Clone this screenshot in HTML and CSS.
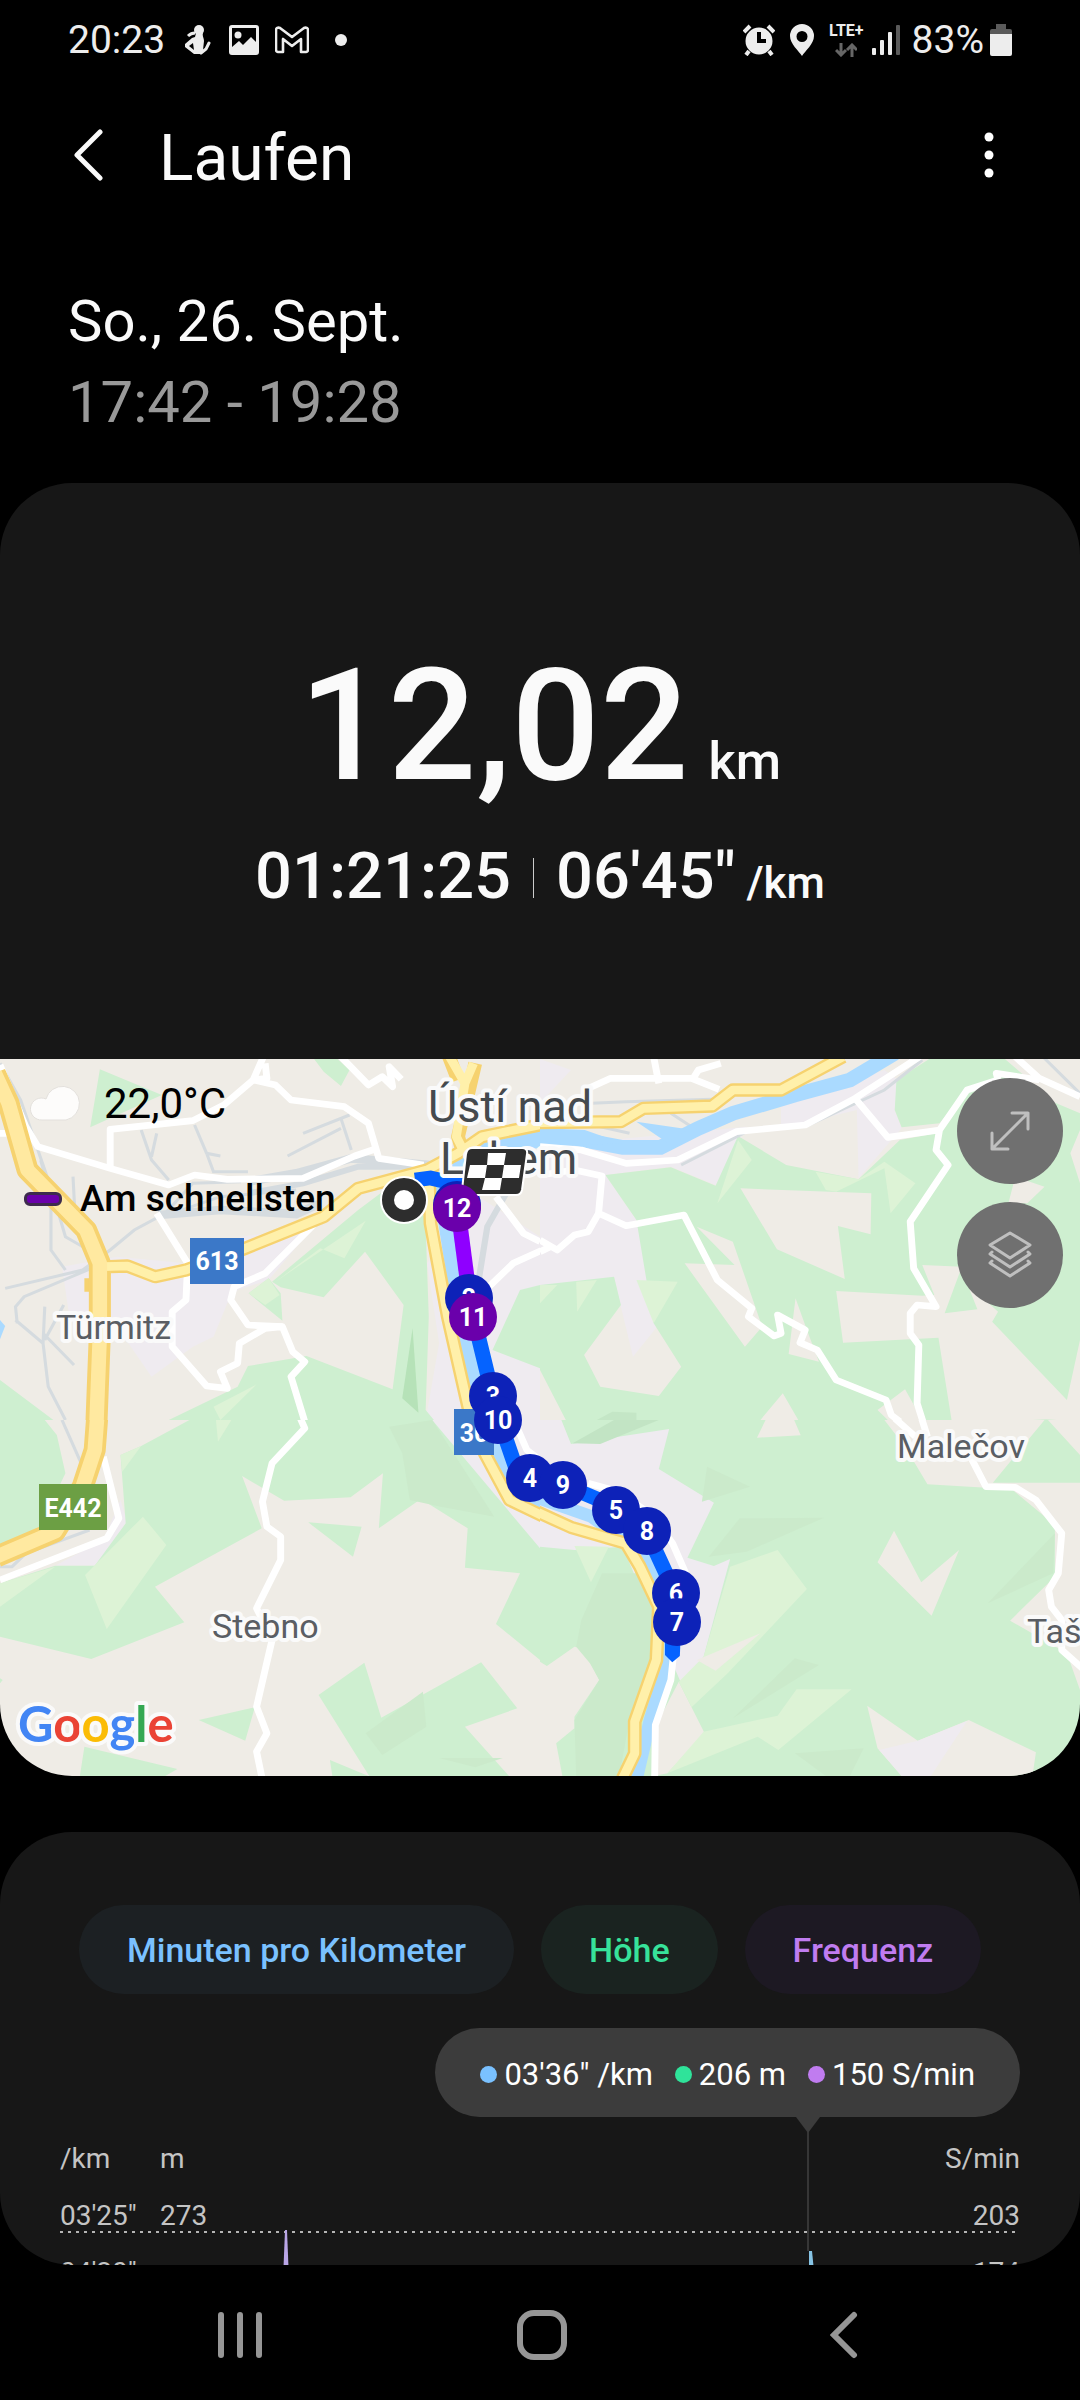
FILE: index.html
```html
<!DOCTYPE html>
<html lang="de">
<head>
    <meta charset="UTF-8">
    <meta name="viewport" content="width=device-width, initial-scale=1.0">
    <title>Laufen</title>
    <link rel="stylesheet" href="styles.css">
</head>
<body>
    <div class="status-bar">
        <span class="clock">20:23</span>
        <svg class="status-icon runner" width="26" height="30" viewBox="0 0 26 30">
            <circle cx="14" cy="5" r="5"/>
            <path d="M11 8h7c-1 3 1 5 1 8l-1 9-2 4H9l-9-7c-1-1-1-2 0-3l7-6 3-1z"/>
            <path d="M3 11c2-2 4-3 7-3" fill="none" stroke="#ededed" stroke-width="3"/>
            <path d="M4 21l4-3 1 7z" fill="#000"/>
            <path d="M16 28l5-4 3-6" fill="none" stroke="#ededed" stroke-width="3" stroke-linecap="round"/>
        </svg>
        <svg class="status-icon" width="30" height="30" viewBox="0 0 30 30">
            <path fill-rule="evenodd" d="M3 0h24a3 3 0 0 1 3 3v24a3 3 0 0 1-3 3H3a3 3 0 0 1-3-3V3a3 3 0 0 1 3-3zM3 3v19l7-6 4 4 8-8 5 5V3z"/>
            <circle cx="9" cy="10" r="3.5"/>
        </svg>
        <svg class="status-icon" width="34" height="28" viewBox="0 0 34 28">
            <path d="M8 26H3c-1 0-2-1-2-2V4c0-2 2-3 4-2l12 9 12-9c2-1 4 0 4 2v20c0 1-1 2-2 2h-5V13l-9 7-9-7z" fill="none" stroke="#ededed" stroke-width="2.6" stroke-linejoin="round"/>
        </svg>
        <span class="more-dot"></span>
        <div class="status-right">
            <svg class="status-icon" width="32" height="32" viewBox="0 0 32 32">
                <path fill-rule="evenodd" d="M16 3.500a13.500 13.500 0 1 1 0 27a13.500 13.500 0 0 1 0-27zM14 8v11h9v-4h-5V8z"/>
                <path d="M1 8l6-6M31 8l-6-6M6 27l-3 4M26 27l3 4" stroke="#ededed" stroke-width="4"/>
            </svg>
            <svg class="status-icon" width="24" height="32" viewBox="0 0 24 32">
                <path fill-rule="evenodd" d="M12 0a12 12 0 0 1 12 12c0 8-9 15-12 20C9 27 0 20 0 12A12 12 0 0 1 12 0zM12 7a5.500 5.500 0 1 0 0 11a5.500 5.500 0 0 0 0-11z"/>
            </svg>
            <div class="network">
                <span>LTE+</span>
                <svg width="22" height="14" viewBox="0 0 22 14" fill="none" stroke="#666" stroke-width="3">
                    <path d="M6 0v12M1 7l5 5 5-5M17 14V2M12 7l5-5 5 5"/>
                </svg>
            </div>
            <svg class="status-icon signal" width="28" height="30" viewBox="0 0 28 30">
                <rect x="0" y="23" width="4" height="7" rx="1"/>
                <rect x="8" y="15" width="4" height="15" rx="1"/>
                <rect x="16" y="7" width="4" height="23" rx="1"/>
                <rect x="24" y="0" width="4" height="30" rx="1" fill="#5a5a5a"/>
            </svg>
            <span class="clock">83%</span>
            <svg class="status-icon battery" width="22" height="32" viewBox="0 0 22 32">
                <path fill="#5a5a5a" d="M6 0h10v5h4a2 2 0 0 1 2 2v4H0V7a2 2 0 0 1 2-2h4z"/>
                <path d="M0 10h22v20a2 2 0 0 1-2 2H2a2 2 0 0 1-2-2z"/>
            </svg>
        </div>
    </div>

    <header class="app-bar">
        <button class="icon-btn" aria-label="Zurück">
            <svg width="30" height="52" viewBox="0 0 30 52" fill="none" stroke="#fafafa" stroke-width="5" stroke-linecap="round" stroke-linejoin="round"><path d="M27 3L4 26l23 23"/></svg>
        </button>
        <h1>Laufen</h1>
        <button class="icon-btn menu" aria-label="Mehr">
            <svg width="10" height="46" viewBox="0 0 10 46" fill="#fff"><circle cx="5" cy="5" r="4.500"/><circle cx="5" cy="23" r="4.500"/><circle cx="5" cy="41" r="4.500"/></svg>
        </button>
    </header>

    <main>
        <div class="date">
            <p>So., 26. Sept.</p>
            <p class="time">17:42 - 19:28</p>
        </div>

        <section class="summary">
            <div class="distance"><span class="distance-value">12,02</span><span class="distance-unit">km</span></div>
            <div class="details">
                <span>01:21:25</span>
                <span class="divider"></span>
                <span>06'45"</span><small>/km</small>
            </div>
        </section>

        <section class="map">
            <svg class="map-canvas" viewBox="0 0 1080 717">
                <!-- north west -->
                <svg x="0" y="-9" width="540" height="370" viewBox="0 0 1568 1110" preserveAspectRatio="none">
                    <rect class="land" width="1568" height="1110"/>
                    <g class="urban">
                        <path d="M180 650L340 620 540 640 700 560 910 530 780 690 690 720 660 760 620 860 560 890 440 980 360 860 200 790z"/>
                        <path d="M1390 440L1568 560V1110H1236L1275 880 1240 640z"/>
                    </g>
                    <g class="wood">
                        <path d="M290 58L470 135 262 232zM912 27H980L1015 60 990 108 940 65z"/>
                        <path d="M790 695L1040 480 1105 430 1235 500 1245 800 1236 1080 1260 1110H490L690 1010 720 948 890 918 1140 1018 1172 765 1060 605 940 742 815 712z"/>
                        <path d="M722 730L780 685 815 730 820 812zM1430 900L1510 720 1568 705V955zM0 990L155 1110H0z"/>
                    </g>
                    <path class="meadow" d="M800 695L1062 512 1000 625 930 595zM620 1070L745 1003 640 1110zM722 730L780 685 812 735 770 765z"/>
                    <path fill="#b6e2b8" d="M1198 835L1215 1088 1168 1045z"/>
                    <g class="rail">
                        <path d="M0 40L60 150 110 300 150 420 190 560 240 590 310 610M212 380L218 500 260 590M118 330L148 440V600L190 660M15 715L240 660 320 600 390 540 480 490 560 400 700 395M50 820L45 770 70 740 300 640M45 810L125 880 140 1010 190 1110M130 770L125 880M185 765L130 870M125 850L215 945M410 240L440 330 490 390M455 250L440 320M565 225L600 310 640 318M600 310L620 365H720M880 250L1015 195M990 205L1020 300M835 318L990 235M500 490L640 440 860 420"/>
                        <path stroke-width="26" d="M720 395L860 370 1020 325 1250 345M460 495L640 480 860 492 930 460"/>
                        <path stroke-width="18" d="M720 430L880 400 1040 350 1200 350M1470 430L1415 530 1390 690"/>
                    </g>
                    <path class="water" stroke-width="50" d="M1600 262L1450 290 1340 330 1290 400 1295 500 1325 700 1365 950 1405 1120"/>
                    <path fill="#aadaff" d="M0 810L15 828 0 868z"/>
                    <g class="road">
                        <path d="M0 45L75 230 110 290 320 355 490 405 565 375 660 388 880 385 1030 318 1090 297"/>
                        <path d="M320 355V238L560 212 650 165 735 90 765 20M735 90L775 85 770 40M735 90L800 105 845 150 1000 170 1070 220 1100 325 1230 345"/>
                        <path d="M990 20L1070 105 1110 80 1140 110 1130 50 1165 88M0 250H20"/>
                        <path d="M455 490L545 640 540 750 500 785V890L600 1008 660 1015 640 965 690 940 695 880 770 835 820 830 850 905 885 935 845 980 885 1115"/>
                        <path d="M910 525L770 670 680 710 670 750 720 825 820 830M1440 440L1520 550 1568 575M1575 600L1490 640 1420 710 1400 800"/>
                    </g>
                    <path class="main-edge" d="M1300 10L1330 90M1380 40L1330 260 1345 310M320 650L370 648 450 680 540 660 700 600 940 500 1040 415 1240 360 1330 310 1400 260 1580 222M1245 360L1250 520 1300 800 1370 1120M262 705H245"/>
                    <path class="motorway-edge" d="M-15 70L25 160 80 360 250 540 290 640V850L280 1120"/>
                    <path class="main" d="M1300 10L1350 100 1375 40M1350 100L1325 260 1345 300M300 650L370 648 450 680 540 660 700 600 940 500 1040 415 1240 360 1330 310 1400 260 1580 222M1245 360L1250 520 1300 800 1370 1120"/>
                    <path class="motorway" d="M-15 70L25 160 80 360 250 540 290 640V850L280 1120"/>
                    <path class="route" d="M1205 390L1250 384 1340 405"/>
                    <path class="route fast" d="M1330 480L1358 700"/>
                    <path class="route" d="M1375 800L1415 970 1450 1120"/>
                </svg>
                <!-- north east -->
                <svg x="540" y="-9" width="540" height="370" viewBox="0 0 1568 1110" preserveAspectRatio="none">
                    <rect class="land" width="1568" height="1110"/>
                    <path class="urban" d="M0 27L90 60 0 160zM0 290L600 230 510 405 380 350 190 375 280 510 340 830 270 920 235 770 215 680 0 740zM700 170L1000 60 1040 90 1030 180 1050 235 925 385 920 180 700 235z"/>
                    <g class="wood">
                        <path d="M190 375L380 352 510 407 575 258 715 345 925 388 1045 270 1150 250 1240 120 1340 90 1568 190V1110H75L0 960V705L215 680 235 765 128 915 175 1010 345 1038 410 950 330 820 280 510z"/>
                        <path d="M1035 90L1130 27H1350L1410 80 1240 120 1160 220 1050 232 1030 180z"/>
                    </g>
                    <g class="land">
                        <path d="M582 415L962 430 960 553 865 528 885 687 688 598zM455 530L560 575 645 830 595 890 420 640 565 645zM742 745L775 840 810 935 722 912zM640 1110L705 1030 750 1110zM1380 380L1465 410 1415 460 1360 460zM980 1080L1060 1018 1110 1110H1010zM1568 240L1540 310 1568 400z"/>
                        <path d="M1110 645L1225 650 1175 790 1270 778 1240 700 1330 785 1313 815 1530 1050 1568 870V1110H1500L1470 1108 1430 1110H1195L1157 863 880 878 860 723 1110 737 1145 735z"/>
                    </g>
                    <path class="meadow" d="M575 270L615 330 515 460zM800 365L925 388 1000 335 1090 400 1018 490 1000 355 860 425 830 420zM280 690L400 695 330 820zM0 705H50L0 760zM105 695L165 690 108 785z"/>
                    <path fill="#c4e6c6" d="M165 1110L210 1085 280 1088V1110z"/>
                    <path class="rail" d="M1110 30L1000 120 780 225 600 245 410 345M1460 20L1568 130M0 250L130 220 260 250M380 190L440 230"/>
                    <path class="rail" stroke-width="26" d="M150 160L250 155 500 148"/>
                    <path class="water" stroke-width="44" d="M-10 262L100 265 240 292 350 292 460 235 560 190 740 135 900 90 1030 10"/>
                    <path fill="#aadaff" d="M280 215L430 238 370 278zM0 235L130 240 240 280 0 290z"/>
                    <g class="road">
                        <path d="M0 290L120 300 250 340 400 330 570 245 770 225 915 145 1110 15M130 120L205 85H440L520 118M330 20L345 100M445 85L460 60 525 40"/>
                        <path d="M0 375L100 360 180 378 170 490 250 527 418 495 515 690 615 775 605 800 680 858 700 850 690 795 770 840 755 878 805 900 860 990 1005 1050 1020 1095 1045 1115M170 490L140 545 100 555 50 600 0 570M0 605L30 590"/>
                        <path d="M915 145L1010 262 1160 240 1240 120 1330 90 1325 70 1450 90M1160 240L1150 300 1185 345 1075 515 1085 655 1150 770 1095 765 1075 790V850L1100 885 1095 1060 1112 1115M1380 20L1450 85 1568 140"/>
                    </g>
                    <path class="main-edge" d="M-10 218L235 215 300 175 500 168 560 120 700 120 880 20"/>
                    <path class="main" d="M-10 218L235 215 300 175 500 168 560 120 700 120 880 20"/>
                </svg>
                <!-- south west -->
                <svg x="0" y="361" width="540" height="356" viewBox="0 0 1568 1068" preserveAspectRatio="none">
                    <rect class="land" width="1568" height="1068"/>
                    <path class="urban" d="M160 437H275L370 310 350 240 300 360zM1250 0H1568V390z"/>
                    <path class="wood" d="M0 0H130L165 45 190 160 110 330 0 390zM410 78L550 0H1255L1568 385V720L1440 612 1510 460 1350 443 1358 325 1222 237 1100 325 1112 160 1018 232 825 242 703 168 760 325 450 500 535 607 265 717 0 650V490L160 437H275L365 310 350 105z"/>
                    <path class="wood" d="M895 307L1050 320 1025 410zM925 825L1058 728 1107 893 1397 727 1502 865 1350 920 1478 1068H1072zM577 900L740 862 712 962zM245 980L515 1047 480 1068H232zM958 1020L1070 1068H965zM0 775L8 780 0 790z"/>
                    <path class="meadow" d="M0 490L160 440 0 560zM247 465L415 290 483 375 310 627zM350 105L410 78 355 155zM627 0H672L633 65z"/>
                    <path class="grove" d="M1062 940L1228 815 1238 920 1110 1005zM1130 20L1255 0 1435 290 1280 260 1190 240 1168 100zM1275 1014L1460 1014 1380 1042z"/>
                    <path class="rail" d="M180 0L240 140M0 440H35L75 400 260 330"/>
                    <path class="water" stroke-width="40" d="M1405 -10L1450 120 1500 210 1580 255"/>
                    <path class="road" d="M300 110L345 295 310 355 0 480M870 -10L885 25 790 130 762 245 775 320 815 350V420L745 565 790 660 745 860 775 940 745 995 760 1070M1500 20L1530 90 1580 130"/>
                    <path class="main-edge" d="M1355 -10L1410 105 1480 240 1580 290"/>
                    <path class="motorway-edge" d="M282 -5L275 90 240 200 160 335 -10 410"/>
                    <path class="main" d="M1355 -10L1410 105 1480 240 1580 290"/>
                    <path class="motorway" d="M282 -5L275 90 240 200 160 335 -10 410"/>
                    <path class="route" d="M1445 -10L1470 60 1500 150 1580 190"/>
                </svg>
                <!-- south east -->
                <svg x="540" y="361" width="540" height="356" viewBox="0 0 1568 1068" preserveAspectRatio="none">
                    <rect class="wood" width="1568" height="1068"/>
                    <path class="urban" d="M0 0H62L90 72 375 27 345 147 505 248 428 413 505 438 552 417 475 710 410 790 330 600 240 380 100 390 0 380z"/>
                    <g class="land">
                        <path d="M403 785L478 940 370 1060 330 1068 345 900zM0 725L20 738 100 680 125 685 172 780 100 890V925L47 970 65 1068H0z"/>
                        <path d="M655 0H738L757 46 630 53zM1028 332L1107 487 1217 390 1137 587 980 427z"/>
                        <path d="M1000 0H1465L1315 188H1568V810L1530 700 1365 602 1495 470V315L1370 208 1125 193 1060 80zM1475 0H1568V105zM950 857L1097 962 1245 900 1440 997 1430 1068H1050L980 985z"/>
                    </g>
                    <path class="urban" d="M985 990L1097 962 1240 903 1135 1068H1050z"/>
                    <path class="meadow" d="M552 440L690 390 775 507 545 760 440 862 403 785 475 710zM370 1060L475 935 690 887 745 808H905L692 990 632 950zM100 378L200 380 148 487z"/>
                    <path class="land" d="M455 720L640 640 510 752z"/>
                    <path class="grove" d="M180 460H300L340 580 330 720 260 900 230 1068H105L100 900 172 780 145 730 105 680 120 600zM580 295L825 293 600 395 490 410zM740 715L810 735 560 895zM485 140L610 200 470 245zM1495 340L1490 460 1300 550zM740 1000L940 985 900 1068H830z"/>
                    <path fill="#c2e4c4" d="M215 0H345L175 72 95 70z"/>
                    <path class="water" stroke-width="38" d="M-10 232L150 290 300 400 370 560 372 720 320 900 280 1075"/>
                    <path class="road" d="M140 190L230 215 330 290 385 370 440 500M388 700L380 780 335 915 333 1070M1030 -5L1090 50M1108 -5L1125 50M1250 110L1295 200 1380 202 1440 240 1515 340 1505 460 1477 510 1485 560 1515 600V690L1575 745"/>
                    <path class="main-edge" d="M-10 275L90 322 250 370 290 440 345 560 338 720 275 905V1000L240 1075"/>
                    <path class="main" d="M-10 275L90 322 250 370 290 440 345 560 338 720 275 905V1000L240 1075"/>
                    <path class="route" d="M-40 175L70 195 230 265 310 335 395 525 385 670"/>
                    <path fill="#0563ff" d="M363 660H408L406 708 384 727 363 705z"/>
                </svg>

                <g class="city">
                    <text x="428" y="63">Ústí nad</text>
                    <text x="440" y="115">Labem</text>
                </g>
                <g class="village">
                    <text x="56" y="280">Türmitz</text>
                    <text x="212" y="579">Stebno</text>
                    <text x="897" y="399">Malečov</text>
                    <text x="1027" y="584">Taš</text>
                </g>
                <g class="shield">
                    <rect x="190" y="179" width="54" height="46" fill="#3b78c8"/>
                    <text x="217" y="211">613</text>
                    <rect x="454" y="350" width="40" height="46" fill="#3b78c8"/>
                    <text x="474" y="383">30</text>
                    <rect x="39" y="425" width="68" height="46" fill="#6c9f44"/>
                    <text x="73" y="458">E442</text>
                </g>

                <!-- start and finish -->
                <circle cx="404" cy="141" r="23" fill="#2d2d2d" stroke="#fff" stroke-width="2"/>
                <circle cx="404" cy="141" r="10" fill="#fff"/>
                <circle cx="457" cy="146" r="24" fill="#0d22b8"/>
                <path d="M472 89H522Q528 89 527 95L522 131Q521 136 516 136H466Q461 136 462 131L466 95Q467 89 472 89z" fill="#2d2d2d" stroke="#fff" stroke-width="2"/>
                <path fill="#fff" d="M488 94h18l-2 12h-17zM470 106h17l-2 13h-18zM504 106h17l-2 13h-17zM485 119h17l-2 12h-18z"/>

                <g class="pins">
                    <g class="pin-fast"><circle cx="457" cy="149" r="24"/><text x="457" y="158">12</text></g>
                    <g><circle cx="469" cy="239" r="24"/><text x="469" y="248">2</text></g>
                    <g class="pin-fast"><circle cx="473" cy="258" r="24"/><text x="473" y="267">11</text></g>
                    <g><circle cx="493" cy="337" r="24"/><text x="493" y="346">3</text></g>
                    <g><circle cx="498" cy="361" r="24"/><text x="498" y="370">10</text></g>
                    <g><circle cx="530" cy="419" r="24"/><text x="530" y="428">4</text></g>
                    <g><circle cx="563" cy="426" r="24"/><text x="563" y="435">9</text></g>
                    <g><circle cx="616" cy="451" r="24"/><text x="616" y="460">5</text></g>
                    <g><circle cx="647" cy="472" r="24"/><text x="647" y="481">8</text></g>
                    <g><circle cx="676" cy="534" r="24"/><text x="676" y="543">6</text></g>
                    <g><circle cx="677" cy="563" r="24"/><text x="677" y="572">7</text></g>
                </g>

                <text class="google" x="18" y="683"><tspan fill="#4285f4">G</tspan><tspan fill="#ea4335">o</tspan><tspan fill="#fbbc05">o</tspan><tspan fill="#4285f4">g</tspan><tspan fill="#34a853">l</tspan><tspan fill="#ea4335">e</tspan></text>
            </svg>

            <div class="map-info">
                <div class="weather">
                    <svg width="50" height="36" viewBox="0 0 50 36"><path d="M12 34a11 11 0 1 1 4-21 17 17 0 1 1 20 21z" fill="#fdfcfb" stroke="#e3e0dc"/></svg>
                    <span>22,0°C</span>
                </div>
                <div class="legend"><span class="swatch"></span>Am schnellsten</div>
            </div>
            <div class="map-controls">
                <button aria-label="Vergrößern">
                    <svg width="44" height="44" viewBox="0 0 44 44"><path d="M4 40L40 4M24 4h16v16M4 24v16h16"/></svg>
                </button>
                <button aria-label="Ebenen">
                    <svg width="46" height="50" viewBox="0 0 46 50"><path d="M23 3L43 15 23 28 3 15zM5 22l-2 2 20 13 20-13-2-2M5 31l-2 2 20 13 20-13-2-2"/></svg>
                </button>
            </div>
        </section>

        <section class="chart-card">
            <div class="filters">
                <button class="pace">Minuten pro Kilometer</button>
                <button class="height">Höhe</button>
                <button class="cadence">Frequenz</button>
            </div>
            <div class="tooltip">
                <span class="value pace-dot">03'36" /km</span>
                <span class="value height-dot">206 m</span>
                <span class="value cadence-dot">150 S/min</span>
            </div>
            <div class="chart">
                <div class="axis-row"><span>/km</span><span>m</span><span>S/min</span></div>
                <div class="axis-row line"><span>03'25"</span><span>273</span><span>203</span></div>
                <div class="axis-row"><span>04'20"</span><span></span><span>174</span></div>
                <svg class="peak peak-cadence" width="6" height="60" viewBox="0 0 6 60"><path d="M2 0h2l2 50v10H0V50z" fill="#b9a5e6"/></svg>
                <svg class="peak peak-pace" width="6" height="40" viewBox="0 0 6 40"><path d="M1 0h3l2 20v20H1z" fill="#86c3e4"/></svg>
            </div>
        </section>
    </main>

    <nav class="nav-bar">
        <button aria-label="Letzte Apps"><svg width="44" height="48" viewBox="0 0 44 48"><path d="M3 4v40M22 4v40M41 4v40"/></svg></button>
        <button aria-label="Startseite"><svg width="50" height="50" viewBox="0 0 50 50"><rect x="3" y="3" width="44" height="44" rx="14"/></svg></button>
        <button aria-label="Zurück"><svg width="28" height="48" viewBox="0 0 28 48"><path d="M24 4L4 24l20 20"/></svg></button>
    </nav>
</body>
</html>
```

FILE: styles.css
```css
* {
    box-sizing: border-box;
}

body {
    margin: 0;
    height: 100vh;
    display: flex;
    flex-direction: column;
    background: #000;
    color: #fafafa;
    font-family: Roboto, "Liberation Sans", sans-serif;
    overflow: hidden;
}

button {
    border: none;
    padding: 0;
    background: none;
    color: inherit;
    font-family: inherit;
    cursor: pointer;
}

svg {
    display: block;
}

h1, p {
    margin: 0;
    font-weight: 400;
}

/* status bar */
.status-bar {
    display: flex;
    align-items: center;
    height: 80px;
    padding: 0 68px;
    flex: none;
    color: #ededed;
}

.clock {
    font-size: 39px;
    line-height: 80px;
}

.status-icon {
    fill: #ededed;
    margin-right: 16px;
}

.runner {
    margin: 0 18px 0 20px;
}

.more-dot {
    width: 12px;
    height: 12px;
    margin-left: 10px;
    border-radius: 50%;
    background: #ededed;
}

.status-right {
    display: flex;
    align-items: center;
    margin-left: auto;
}

.status-right .status-icon {
    margin-right: 15px;
}

.network {
    display: flex;
    flex-direction: column;
    align-items: center;
    gap: 4px;
    margin-right: 8px;
    font-size: 16px;
    font-weight: 700;
    line-height: 16px;
}

.status-right .signal {
    margin-right: 12px;
}

.status-right .battery {
    margin: 0 0 0 6px;
}

/* title */
.app-bar {
    display: flex;
    align-items: center;
    flex: none;
    height: 150px;
    padding: 0 86px 0 73px;
}

.app-bar h1 {
    margin-left: 56px;
    padding-top: 8px;
    font-size: 64px;
    line-height: 76px;
}

.menu {
    margin-left: auto;
}

main {
    flex: 1;
    min-height: 0;
    display: flex;
    flex-direction: column;
}

.date {
    padding: 51px 68px 40px;
    font-size: 58px;
    line-height: 81px;
}

.time {
    color: #999;
}

/* summary */
.summary {
    padding: 161px 20px 145px;
    border-radius: 72px 72px 0 0;
    background: #171717;
    font-weight: 500;
}

.distance {
    display: flex;
    justify-content: center;
    align-items: baseline;
    gap: 20px;
    line-height: 164px;
}

.distance-value {
    font-size: 156px;
}

.distance-unit {
    font-size: 52px;
    line-height: 60px;
}

.details {
    display: flex;
    justify-content: center;
    align-items: baseline;
    margin-top: 30px;
    font-size: 65px;
    line-height: 76px;
}

.details small {
    margin-left: 11px;
    font-size: 44px;
    line-height: 50px;
}

.divider {
    width: 1px;
    height: 40px;
    margin: 0 22px;
    background: #ccc;
}

/* map */
.map {
    position: relative;
    flex: none;
    border-radius: 0 0 72px 72px;
    overflow: hidden;
}

.map-canvas {
    width: 100%;
    height: auto;
}

.land {
    fill: #efece6;
}

.urban {
    fill: #efebf0;
}

.wood {
    fill: #ceefd0;
}

.grove {
    fill: #cbeacb;
}

.meadow {
    fill: #ddf3d6;
}

.water {
    fill: none;
    stroke: #aadaff;
}

.rail {
    fill: none;
    stroke: #d5dbdf;
    stroke-width: 9;
}

.road {
    fill: none;
    stroke: #fff;
    stroke-width: 20;
    stroke-linejoin: round;
}

.main, .main-edge, .motorway, .motorway-edge {
    fill: none;
    stroke: #fff0aa;
    stroke-width: 26;
    stroke-linejoin: round;
}

.main-edge {
    stroke: #f6d26f;
    stroke-width: 40;
}

.motorway {
    stroke: #ffe9a0;
    stroke-width: 42;
}

.motorway-edge {
    stroke: #f6d26f;
    stroke-width: 64;
}

.route {
    fill: none;
    stroke: #0563ff;
    stroke-width: 44;
}

.fast {
    stroke: #8f00ff;
}

.city, .village, .google {
    paint-order: stroke;
    stroke: #fafafa;
    stroke-width: 8px;
    stroke-linejoin: round;
}

.city {
    fill: #454a4e;
    font-size: 45px;
}

.village {
    fill: #5a5e64;
    font-size: 34px;
}

.shield, .pins {
    font-size: 25px;
    font-weight: 700;
    text-anchor: middle;
}

.shield text, .pins text {
    fill: #fff;
}

.pins circle {
    fill: #0d22b8;
}

.pins .pin-fast circle {
    fill: #6a00ab;
}

.google {
    font-family: Lato, sans-serif;
    font-size: 49px;
    font-weight: 700;
}

.map-info {
    position: absolute;
    top: 20px;
    left: 24px;
    color: #000;
}

.weather {
    display: flex;
    align-items: center;
    gap: 24px;
    padding-left: 6px;
    font-size: 42px;
    line-height: 50px;
}

.legend {
    display: flex;
    align-items: center;
    gap: 18px;
    margin-top: 50px;
    font-size: 37px;
    font-weight: 500;
    line-height: 40px;
}

.swatch {
    width: 38px;
    height: 14px;
    border: 3px solid #3d2b4d;
    border-radius: 6px;
    background: #6a00ab;
}

.map-controls {
    position: absolute;
    top: 19px;
    right: 17px;
    display: flex;
    flex-direction: column;
    gap: 18px;
}

.map-controls button {
    display: flex;
    align-items: center;
    justify-content: center;
    width: 106px;
    height: 106px;
    border-radius: 50%;
    background: #707070;
}

.map-controls svg {
    fill: none;
    stroke: #bfbfbf;
    stroke-width: 3;
    stroke-linecap: round;
    stroke-linejoin: round;
}

/* chart */
.chart-card {
    flex: 1;
    min-height: 0;
    margin-top: 56px;
    padding: 73px 60px 0;
    border-radius: 72px;
    background: #171717;
    overflow: hidden;
}

.filters {
    display: flex;
    gap: 27px;
    padding-left: 19px;
}

.filters button {
    height: 89px;
    padding: 0 48px;
    border-radius: 45px;
    font-size: 34px;
    font-weight: 500;
}

.filters .pace {
    background: #1c2023;
    color: #7ac1ff;
}

.filters .height {
    background: #1a2320;
    color: #37e29b;
}

.filters .cadence {
    background: #1d1923;
    color: #c07cf0;
}

.tooltip {
    position: relative;
    display: flex;
    align-items: center;
    gap: 22px;
    width: fit-content;
    height: 89px;
    margin: 34px 0 0 auto;
    padding: 4px 45px 0;
    border-radius: 45px;
    background: #3c3c3c;
    color: #fff;
    font-size: 31px;
}

.tooltip::after {
    content: "";
    position: absolute;
    top: 100%;
    right: 200px;
    border: 12px solid transparent;
    border-top: 16px solid #3c3c3c;
    border-bottom: none;
}

/* marker line below the arrow */
.tooltip::before {
    content: "";
    position: absolute;
    top: 100%;
    right: 211px;
    width: 2px;
    height: 134px;
    background: #363636;
}

.value {
    display: flex;
    align-items: center;
    gap: 7px;
    white-space: pre;
}

.value::before {
    content: "";
    width: 17px;
    height: 17px;
    border-radius: 50%;
    background: #7ac1ff;
}

.height-dot::before {
    background: #2fe39a;
}

.cadence-dot::before {
    background: #c07cf0;
}

.chart {
    position: relative;
    padding-top: 13px;
}

.axis-row {
    position: relative;
    display: flex;
    color: #c4c4c4;
    font-size: 28px;
    line-height: 57px;
}

.axis-row span:first-child {
    width: 100px;
}

.axis-row span:last-child {
    margin-left: auto;
}

.line::after {
    content: "";
    position: absolute;
    left: 0;
    right: 0;
    bottom: 11px;
    height: 2px;
    background: repeating-linear-gradient(90deg, #b5b5b5 0 3px, transparent 3px 8px);
}

.peak {
    position: absolute;
}

.peak-cadence {
    top: 113px;
    left: 223px;
}

.peak-pace {
    top: 134px;
    right: 206px;
}

/* system navigation */
.nav-bar {
    display: flex;
    flex: none;
    height: 135px;
    padding: 5px 85px 0 89px;
}

.nav-bar button {
    flex: 1;
    display: flex;
    align-items: center;
    justify-content: center;
}

.nav-bar svg {
    fill: none;
    stroke: #969696;
    stroke-width: 6;
    stroke-linecap: round;
}
```
